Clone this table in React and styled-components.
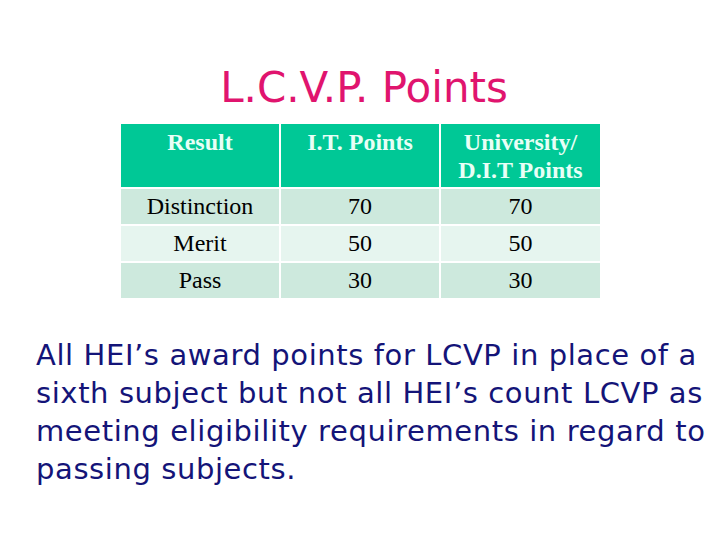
import React from "react";
import styled, { createGlobalStyle } from "styled-components";

const Global = createGlobalStyle`
  html, body { margin: 0; padding: 0; background: #ffffff; }
  #root { width: 720px; height: 540px; }
`;

const Slide = styled.div`
  width: 720px;
  height: 540px;
  display: flex;
  flex-direction: column;
  align-items: flex-start;
  overflow: hidden;
`;

const Title = styled.h1`
  align-self: stretch;
  margin: 60px 0 0 8px;
  text-align: center;
  font-family: "DejaVu Sans", sans-serif;
  font-weight: normal;
  font-size: 42px;
  line-height: 56px;
  color: #e0146e;
`;

const Table = styled.div`
  margin: 8px 0 0 121px;
  width: 479px;
  display: grid;
  grid-template-columns: 158px 158px 159px;
  gap: 2px;
  font-family: "Liberation Serif", serif;
`;

const HeadCell = styled.div`
  height: 63px;
  background: #00c896;
  color: #e8fff6;
  font-weight: bold;
  font-size: 24px;
  line-height: 28px;
  text-align: center;
  padding-top: 4px;
  box-sizing: border-box;
`;

const Cell = styled.div`
  height: ${(p) => p.$h}px;
  background: ${(p) => (p.$alt ? "#e6f5ef" : "#cde9dd")};
  color: #000;
  font-size: 24px;
  display: flex;
  align-items: center;
  justify-content: center;
`;

const Body = styled.div`
  margin: 38px 0 0 36px;
  font-family: "DejaVu Sans", sans-serif;
  font-size: 29px;
  line-height: 38px;
  color: #141478;
  letter-spacing: 0.6px;
`;

const Line = styled.div`
  white-space: nowrap;
`;

const rows = [
  ["Distinction", "70", "70", 35],
  ["Merit", "50", "50", 35],
  ["Pass", "30", "30", 35],
];

export default function App() {
  return (
    <>
      <Global />
      <Slide>
        <Title>L.C.V.P. Points</Title>
        <Table>
          <HeadCell>Result</HeadCell>
          <HeadCell>I.T. Points</HeadCell>
          <HeadCell>
            University/
            <br />
            D.I.T Points
          </HeadCell>
          {rows.map((r, i) => (
            <React.Fragment key={i}>
              <Cell $h={r[3]} $alt={i === 1}>{r[0]}</Cell>
              <Cell $h={r[3]} $alt={i === 1}>{r[1]}</Cell>
              <Cell $h={r[3]} $alt={i === 1}>{r[2]}</Cell>
            </React.Fragment>
          ))}
        </Table>
        <Body>
          <Line>All HEI’s award points for LCVP in place of a</Line>
          <Line>sixth subject but not all HEI’s count LCVP as</Line>
          <Line>meeting eligibility requirements in regard to</Line>
          <Line>passing subjects.</Line>
        </Body>
      </Slide>
    </>
  );
}
